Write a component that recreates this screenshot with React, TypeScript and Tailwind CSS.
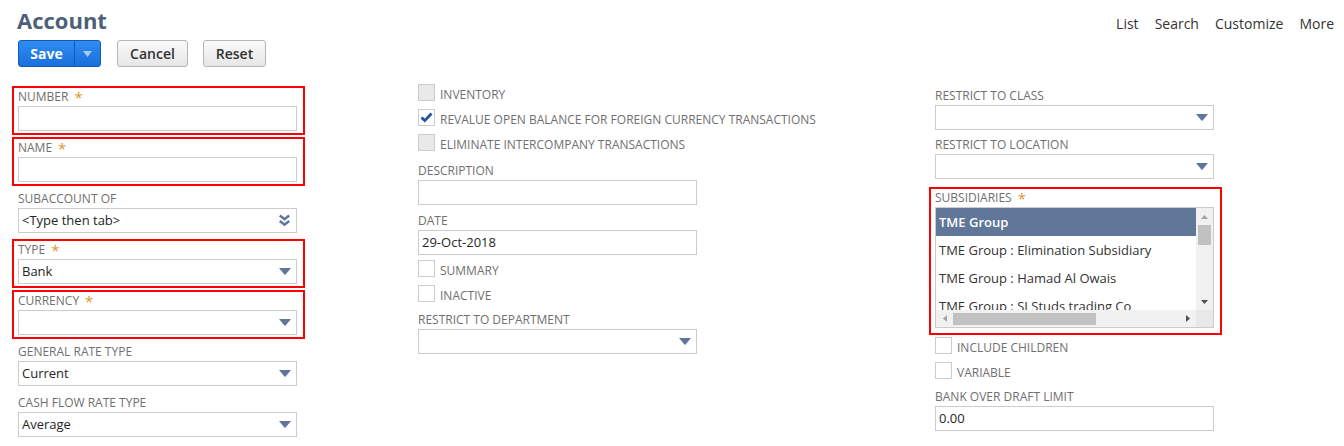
import React from 'react';

const DropArrow = () => (
  <svg width="12" height="7" viewBox="0 0 12 7">
    <path d="M0.6 0 H11.4 Q12 0 11.6 0.5 L6.6 6.4 Q6 7 5.4 6.4 L0.4 0.5 Q0 0 0.6 0 Z" fill="#607799" />
  </svg>
);

const DoubleChevron = () => (
  <svg width="13" height="13" viewBox="0 0 13 13">
    <path d="M1.8 1.5 L6.5 5.2 L11.2 1.5" fill="none" stroke="#607799" strokeWidth="2.6" />
    <path d="M1.8 7 L6.5 10.7 L11.2 7" fill="none" stroke="#607799" strokeWidth="2.6" />
  </svg>
);

function Field({ label, required, red, className, children }: { label: string; required?: boolean; red?: boolean; className?: string; children: React.ReactNode }) {
  return (
    <div className={`w-[293px] border-2 pl-[4px] pr-[6px] pt-[1px] pb-[2px] ${red ? 'border-[#ff0000]' : 'border-transparent'} ${className ?? ''}`}>
      <div className="h-[16px] leading-[16px] text-[12px] text-[#6f6f6f] uppercase flex items-center whitespace-nowrap">
        {label}
        {required && <span className="ml-[6px] text-[15px] leading-[16px] text-[#e0962c]">*</span>}
      </div>
      <div className="mt-[1px]">{children}</div>
    </div>
  );
}

function Input({ value, select, lookup }: { value?: string; select?: boolean; lookup?: boolean }) {
  return (
    <div className="h-[25px] border border-[#cccccc] bg-white flex items-center justify-between pl-[3px] pr-[5px] text-[13px] text-[#262626]">
      <span>{value}</span>
      {select && <DropArrow />}
      {lookup && <DoubleChevron />}
    </div>
  );
}

function Check({ label, checked, disabled }: { label: string; checked?: boolean; disabled?: boolean }) {
  return (
    <div className="h-[25px] flex items-start pl-[6px]">
      <div className={`mt-[1px] w-[17px] h-[17px] border border-[#cccccc] flex items-center justify-center ${disabled ? 'bg-[#e9e9e9]' : 'bg-white'}`}>
        {checked && (
          <svg width="13" height="11" viewBox="0 0 13 11">
            <path d="M1.5 5.5 L4.8 8.6 L11.5 1.5" fill="none" stroke="#21549e" strokeWidth="2.8" />
          </svg>
        )}
      </div>
      <span className="ml-[5px] mt-[4px] h-[16px] leading-[16px] text-[12px] text-[#6f6f6f] uppercase whitespace-nowrap">{label}</span>
    </div>
  );
}

function Subsidiaries() {
  const items = ['TME Group : Elimination Subsidiary', 'TME Group : Hamad Al Owais', 'TME Group : SI Studs trading Co'];
  return (
    <div className="h-[121px] border border-[#cccccc] bg-white flex flex-col">
      <div className="h-[102px] flex">
        <div className="flex-1 overflow-hidden text-[13px]">
          <div className="h-[28px] leading-[28px] pl-[3px] bg-[#607799] text-white font-semibold whitespace-nowrap">TME Group</div>
          {items.map((t) => (
            <div key={t} className="h-[28px] leading-[28px] pl-[3px] text-[#333333] whitespace-nowrap">{t}</div>
          ))}
        </div>
        <div className="w-[17px] bg-[#f1f1f1] flex flex-col items-center">
          <div className="h-[17px] flex items-center justify-center">
            <svg width="7" height="4" viewBox="0 0 7 4"><path d="M0 4 L3.5 0 L7 4 Z" fill="#a3a3a3" /></svg>
          </div>
          <div className="w-[13px] h-[20px] bg-[#c1c1c1]" />
          <div className="flex-1" />
          <div className="h-[17px] flex items-center justify-center">
            <svg width="7" height="4" viewBox="0 0 7 4"><path d="M0 0 L3.5 4 L7 0 Z" fill="#505050" /></svg>
          </div>
        </div>
      </div>
      <div className="h-[17px] flex">
        <div className="flex-1 bg-[#f1f1f1] flex items-center">
          <div className="w-[17px] flex items-center justify-center">
            <svg width="4" height="7" viewBox="0 0 4 7"><path d="M4 0 L0 3.5 L4 7 Z" fill="#a3a3a3" /></svg>
          </div>
          <div className="w-[143px] h-[12px] bg-[#c1c1c1]" />
          <div className="flex-1" />
          <div className="w-[17px] flex items-center justify-center">
            <svg width="4" height="7" viewBox="0 0 4 7"><path d="M0 0 L4 3.5 L0 7 Z" fill="#505050" /></svg>
          </div>
        </div>
        <div className="w-[17px] bg-[#e8e8e8]" />
      </div>
    </div>
  );
}

export default function App() {
  return (
    <div className="w-full h-[446px] bg-white overflow-hidden font-['Open_Sans',sans-serif]">
      {/* header */}
      <div className="flex items-baseline justify-between pl-[17px] pr-[10px] pt-[5px]">
        <h1 className="h-[30px] leading-[30px] text-[22px] font-bold text-[#4d5f79]">Account</h1>
        <div className="flex gap-[16px] text-[14px] text-[#333333]">
          <span>List</span>
          <span>Search</span>
          <span>Customize</span>
          <span>More</span>
        </div>
      </div>
      <div className="flex items-center pl-[18px] mt-[5px] h-[27px]">
        <div className="flex h-[27px] rounded-[3px] border border-[#1259b8] bg-gradient-to-b from-[#2f8cf2] to-[#1a6fdc] overflow-hidden">
          <div className="w-[55px] flex items-center justify-center text-[14px] font-bold text-white">Save</div>
          <div className="w-[1px] bg-[#1259b8]" />
          <div className="w-[25px] flex items-center justify-center">
            <svg width="9" height="6" viewBox="0 0 9 6"><path d="M0 0 H9 L4.5 6 Z" fill="#a9c9f2" /></svg>
          </div>
        </div>
        <div className="ml-[16px] w-[71px] h-[27px] rounded-[3px] border border-[#b5b5b5] bg-gradient-to-b from-[#fafafa] to-[#e6e6e6] flex items-center justify-center text-[14px] font-semibold text-[#333333]">Cancel</div>
        <div className="ml-[15px] w-[63px] h-[27px] rounded-[3px] border border-[#b5b5b5] bg-gradient-to-b from-[#fafafa] to-[#e6e6e6] flex items-center justify-center text-[14px] font-semibold text-[#333333]">Reset</div>
      </div>

      {/* form */}
      <div className="flex pl-[12px] mt-[16px]">
        <div className="w-[400px] pt-[3px] flex flex-col gap-[2px]">
          <Field label="Number" required red><Input /></Field>
          <Field label="Name" required red><Input /></Field>
          <Field label="Subaccount of"><Input value="<Type then tab>" lookup /></Field>
          <Field label="Type" required red><Input value="Bank" select /></Field>
          <Field label="Currency" required red><Input select /></Field>
          <Field label="General rate type"><Input value="Current" select /></Field>
          <Field label="Cash flow rate type"><Input value="Average" select /></Field>
        </div>

        <div className="w-[517px] flex flex-col">
          <Check label="Inventory" disabled />
          <Check label="Revalue open balance for foreign currency transactions" checked />
          <Check label="Eliminate intercompany transactions" disabled />
          <Field label="Description" className="mt-[2px]"><Input /></Field>
          <Field label="Date" className="mt-[1px]"><Input value="29-Oct-2018" /></Field>
          <Check label="Summary" />
          <Check label="Inactive" />
          <Field label="Restrict to department"><Input select /></Field>
        </div>

        <div className="flex-1 pt-[2px] flex flex-col">
          <Field label="Restrict to class"><Input select /></Field>
          <Field label="Restrict to location"><Input select /></Field>
          <Field label="Subsidiaries" required red className="mt-[4px]">
            <Subsidiaries />
            <div className="h-[3px]" />
          </Field>
          <div className="mt-[1px]">
            <Check label="Include children" />
            <Check label="Variable" />
          </div>
          <Field label="Bank over draft limit"><Input value="0.00" /></Field>
        </div>
      </div>
    </div>
  );
}
